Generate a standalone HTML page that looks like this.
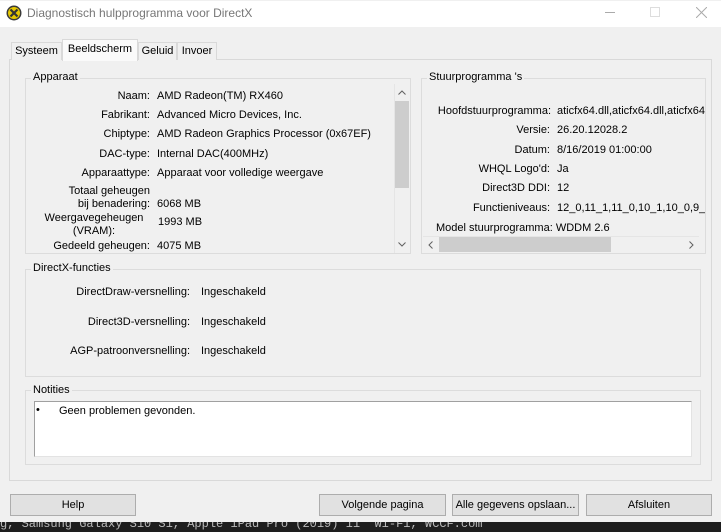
<!DOCTYPE html>
<html><head><meta charset="utf-8"><style>
*{margin:0;padding:0;box-sizing:border-box}
body{width:721px;height:531px;background:#f0f0f0;position:relative;overflow:hidden;font-family:"Liberation Sans",sans-serif;font-size:11px;color:#000}
.a{position:absolute;white-space:nowrap}
.r{position:absolute;white-space:nowrap;text-align:right}
.t{margin-top:1px}
.g{position:absolute;border:1px solid #dcdcdc}
.gl{position:absolute;background:#f0f0f0;padding:0 2px;white-space:nowrap}
.tab{position:absolute;border:1px solid #d9d9d9;border-bottom:none;background:#f0f0f0;text-align:center;line-height:17px}
.btn{position:absolute;border:1px solid #adadad;background:#e1e1e1;text-align:center;line-height:21px;height:22px}
</style></head><body>
<div class="a" style="left:0;top:0;width:721px;height:26px;background:#fff"></div>
<svg class="a" style="left:6px;top:4px" width="16" height="16" viewBox="0 0 16 16"><circle cx="8" cy="8" r="7.5" fill="#3a3a3a"/><circle cx="8" cy="8" r="6" fill="#e6c800"/><path d="M4.5 4.5L11.5 11.5M11.5 4.5L4.5 11.5" stroke="#333" stroke-width="2.2"/></svg>
<div class="a" style="left:27px;top:5px;font-size:12px;color:#777">Diagnostisch hulpprogramma voor DirectX</div>
<div class="a" style="left:605px;top:11px;width:10px;height:1px;background:#aaa"></div>
<div class="a" style="left:650px;top:6px;width:10px;height:10px;border:1px solid #ddd"></div>
<svg class="a" style="left:696px;top:6px" width="11" height="11"><path d="M0 0L11 11M11 0L0 11" stroke="#aaa" stroke-width="1"/></svg>

<div class="a" style="left:9px;top:58px;width:703px;height:422px;border:1px solid #d9d9d9;background:#f0f0f0"></div>
<div class="tab" style="left:11px;top:41px;width:51px;height:18px">Systeem</div>
<div class="tab" style="left:62px;top:38px;width:76px;height:22px;background:#fafafa;line-height:19px">Beeldscherm</div>
<div class="tab" style="left:138px;top:41px;width:39px;height:18px">Geluid</div>
<div class="tab" style="left:177px;top:41px;width:40px;height:18px">Invoer</div>

<div class="g" style="left:25px;top:77px;width:386px;height:176px"></div>
<div class="gl" style="left:31px;top:70px">Apparaat</div>
<div class="t">
<div class="r" style="left:30px;width:120px;top:89px">Naam:</div><div class="a" style="left:157px;top:89px">AMD Radeon(TM) RX460</div>
<div class="r" style="left:30px;width:120px;top:108px">Fabrikant:</div><div class="a" style="left:157px;top:108px">Advanced Micro Devices, Inc.</div>
<div class="r" style="left:30px;width:120px;top:127px">Chiptype:</div><div class="a" style="left:157px;top:127px">AMD Radeon Graphics Processor (0x67EF)</div>
<div class="r" style="left:30px;width:120px;top:147px">DAC-type:</div><div class="a" style="left:157px;top:147px">Internal DAC(400MHz)</div>
<div class="r" style="left:30px;width:120px;top:166px">Apparaattype:</div><div class="a" style="left:157px;top:166px">Apparaat voor volledige weergave</div>
<div class="r" style="left:30px;width:120px;top:184px;line-height:13px">Totaal geheugen<br>bij benadering:</div><div class="a" style="left:157px;top:197px">6068 MB</div>
<div class="r" style="top:211px;line-height:13px;text-align:center;left:40px;width:108px">Weergavegeheugen<br>(VRAM):</div><div class="a" style="left:158px;top:215px">1993 MB</div>
<div class="r" style="left:30px;width:120px;top:239px">Gedeeld geheugen:</div><div class="a" style="left:157px;top:239px">4075 MB</div>
</div>
<div class="a" style="left:394px;top:83px;width:15px;height:169px;background:#f0f0f0;border-left:1px solid #e5e5e5"></div>
<div class="a" style="left:395px;top:100px;width:14px;height:87px;background:#cdcdcd"></div>
<svg class="a" style="left:398px;top:89px" width="8" height="5"><path d="M0.5 4.5L4 1L7.5 4.5" stroke="#606060" fill="none"/></svg>
<svg class="a" style="left:398px;top:241px" width="8" height="5"><path d="M0.5 0.5L4 4L7.5 0.5" stroke="#606060" fill="none"/></svg>

<div class="g" style="left:421px;top:77px;width:285px;height:176px"></div>
<div class="gl" style="left:427px;top:70px">Stuurprogramma 's</div>
<div class="a t" style="left:423px;top:84px;width:282px;height:152px;overflow:hidden">
<div class="r" style="left:0;width:128px;top:19px">Hoofdstuurprogramma:</div><div class="a" style="left:134px;top:19px">aticfx64.dll,aticfx64.dll,aticfx64.dll</div>
<div class="r" style="left:0;width:127px;top:38px">Versie:</div><div class="a" style="left:134px;top:38px">26.20.12028.2</div>
<div class="r" style="left:0;width:127px;top:58px">Datum:</div><div class="a" style="left:134px;top:58px">8/16/2019 01:00:00</div>
<div class="r" style="left:0;width:127px;top:77px">WHQL Logo'd:</div><div class="a" style="left:134px;top:77px">Ja</div>
<div class="r" style="left:0;width:127px;top:96px">Direct3D DDI:</div><div class="a" style="left:134px;top:96px">12</div>
<div class="r" style="left:0;width:127px;top:116px">Functieniveaus:</div><div class="a" style="left:134px;top:116px">12_0,11_1,11_0,10_1,10_0,9_3,9_2,9_1</div>
<div class="a" style="left:13px;top:136px">Model stuurprogramma: WDDM 2.6</div>
</div>
<div class="a" style="left:423px;top:235px;width:276px;height:16px;background:#f0f0f0;border-top:1px solid #e5e5e5"></div>
<div class="a" style="left:439px;top:236px;width:172px;height:15px;background:#cdcdcd"></div>
<svg class="a" style="left:428px;top:240px" width="5" height="8"><path d="M4.5 0.5L1 4L4.5 7.5" stroke="#606060" fill="none"/></svg>
<svg class="a" style="left:689px;top:240px" width="5" height="8"><path d="M0.5 0.5L4 4L0.5 7.5" stroke="#606060" fill="none"/></svg>

<div class="g" style="left:25px;top:268px;width:676px;height:108px"></div>
<div class="gl" style="left:31px;top:261px">DirectX-functies</div>
<div class="t">
<div class="r" style="left:30px;width:160px;top:285px">DirectDraw-versnelling:</div><div class="a" style="left:201px;top:285px">Ingeschakeld</div>
<div class="r" style="left:30px;width:160px;top:315px">Direct3D-versnelling:</div><div class="a" style="left:201px;top:315px">Ingeschakeld</div>
<div class="r" style="left:30px;width:160px;top:344px">AGP-patroonversnelling:</div><div class="a" style="left:201px;top:344px">Ingeschakeld</div>
</div>

<div class="g" style="left:25px;top:389px;width:676px;height:75px"></div>
<div class="gl" style="left:31px;top:383px">Notities</div>
<div class="a" style="left:34px;top:400px;width:658px;height:56px;background:#fff;border:1px solid #a0a0a0;border-right-color:#e3e3e3;border-bottom-color:#e3e3e3"></div>
<div class="a" style="left:36px;top:403px">&bull;</div>
<div class="a" style="left:59px;top:404px">Geen problemen gevonden.</div>

<div class="btn" style="left:10px;top:493px;width:126px">Help</div>
<div class="btn" style="left:319px;top:493px;width:127px">Volgende pagina</div>
<div class="btn" style="left:452px;top:493px;width:127px">Alle gegevens opslaan...</div>
<div class="btn" style="left:586px;top:493px;width:126px">Afsluiten</div>

<div class="a" style="left:0;top:521px;width:721px;height:10px;background:#1e1e1e;overflow:hidden"><div class="a" style="left:0;top:-5px;color:#bbb;font-family:'Liberation Mono',monospace;font-size:12px">g, Samsung Galaxy S10 S1, Apple iPad Pro (2019) 11" Wi-Fi, WCCF.com</div></div>
</body></html>
